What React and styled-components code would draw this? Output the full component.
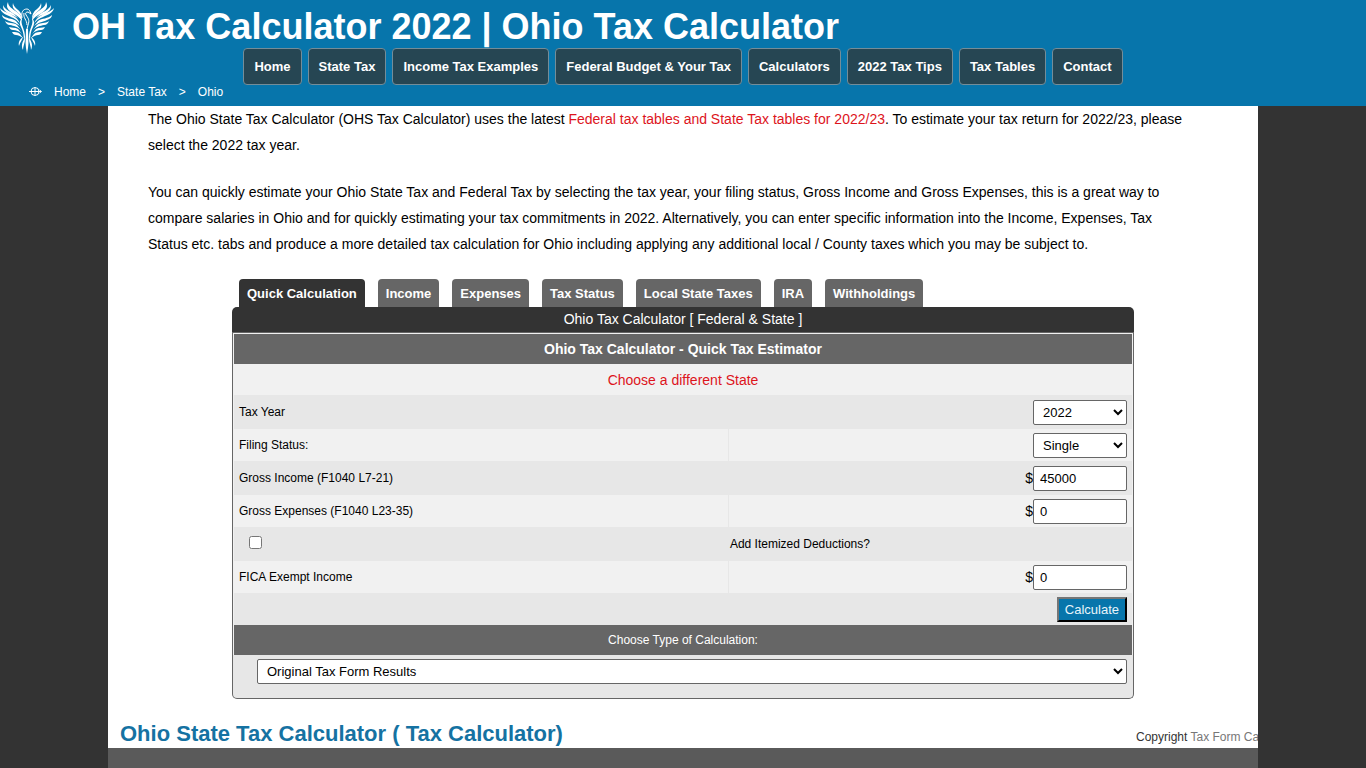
import styled, { createGlobalStyle } from "styled-components";
import { useState } from "react";

const GlobalStyle = createGlobalStyle`
  * {
    box-sizing: border-box;
  }

  body {
    margin: 0;
    background-color: #333;
    font-family: "Liberation Sans", Arial, sans-serif;
    font-size: 14px;
    color: #000;
  }
`;

const Header = styled.header`
  display: grid;
  grid-template-columns: 72px 1fr;
  background-color: #0775ab;
  color: #fff;
`;

const LogoLink = styled.a`
  height: 48px;
  color: #fff;

  svg {
    display: block;
    overflow: visible;
  }
`;

const Title = styled.h1`
  margin: 0;
  padding-top: 6px;
  font-size: 36px;
  line-height: 42px;
  white-space: nowrap;
`;

const Nav = styled.nav`
  grid-column: 1 / -1;
  display: flex;
  justify-content: center;
  gap: 6px;
`;

const NavLink = styled.a`
  padding: 0 10px;
  border: 1px solid #738d99;
  border-radius: 4px;
  background-color: #264653;
  color: #fff;
  font-size: 13px;
  font-weight: bold;
  line-height: 35px;
  text-decoration: none;
  white-space: nowrap;
`;

const Breadcrumb = styled.nav`
  grid-column: 1 / -1;
  display: flex;
  align-items: center;
  gap: 12px;
  height: 21px;
  padding: 0 0 8px 29px;
  font-size: 12px;

  a {
    color: #fff;
    text-decoration: none;
  }
`;

const Page = styled.main`
  max-width: 1150px;
  margin: 0 auto;
  background-color: #fff;
`;

const Intro = styled.div`
  padding: 0 70px 1px 40px;

  p {
    margin: 0 0 21px;
    line-height: 26px;
  }
`;

const RedLink = styled.a`
  color: #dd141c;
  text-decoration: none;
`;

const Calculator = styled.form`
  max-width: 902px;
  margin: 0 auto;
`;

const Tabs = styled.div`
  display: flex;
  gap: 13px;
  padding-left: 7px;
`;

const Tab = styled.button`
  height: 28px;
  padding: 0 8px;
  border: 0;
  border-radius: 4px 4px 0 0;
  background-color: ${(props) => (props.$active ? "#333" : "#666")};
  color: #fff;
  font: bold 13px "Liberation Sans", Arial, sans-serif;
  white-space: nowrap;
  cursor: pointer;
`;

const PanelTitle = styled.div`
  border-bottom: 1px solid #666;
  border-radius: 5px 5px 0 0;
  background-color: #333;
  color: #fff;
  line-height: 25px;
  text-align: center;
`;

const Panel = styled.div`
  border: 1px solid #666;
  border-top: 0;
  border-radius: 0 0 5px 5px;
  background-color: #e7e7e7;
`;

const Table = styled.table`
  width: 100%;
  padding: 1px 1px 0;
  border-spacing: 0;
  table-layout: fixed;
  background-color: #f1f1f1;
  font-size: 12px;

  td,
  th {
    padding: 0 5px;
  }

  td + td {
    padding-left: 1px;
  }
`;

const LabelCol = styled.col`
  width: 55%;
`;

const BarRow = styled.tr`
  height: 30px;
  background-color: #666;
  color: #fff;
`;

const BarTitle = styled.th`
  font-size: ${(props) => (props.$small ? "12px" : "14px")};
  font-weight: ${(props) => (props.$small ? "normal" : "bold")};
`;

const Row = styled.tr`
  height: ${(props) => (props.$dark ? "34px" : "32px")};
  background-color: ${(props) => (props.$dark ? "#e7e7e7" : "#f1f1f1")};

  td + td {
    border-left: 1px solid #e7e7e7;
  }
`;

const CenterCell = styled.td`
  height: 31px;
  font-size: 14px;
  text-align: center;
`;

const Field = styled.div`
  display: flex;
  justify-content: flex-end;
  align-items: center;
  font-size: 14px;
`;

const Input = styled.input`
  width: 94px;
  height: 25px;
  padding: 0 6px;
  border: 1px solid #666;
  border-radius: 2px;
  font: 13px "Liberation Sans", Arial, sans-serif;
`;

const Select = styled.select`
  width: ${(props) => (props.$wide ? "100%" : "94px")};
  height: 25px;
  padding: 0 5px;
  border: 1px solid #666;
  border-radius: 2px;
  background-color: #fff;
  color: #000;
  font: 13px "Liberation Sans", Arial, sans-serif;
`;

const Checkbox = styled.input`
  display: block;
  margin: 0 0 3px 10px;
`;

const CalcRow = styled.tr`
  height: 32px;
  background-color: #e7e7e7;
`;

const CalcButton = styled.button`
  height: 25px;
  padding: 0 6px;
  border: 2px outset #222;
  background-color: #0775ab;
  color: #e8f4fa;
  font: 13px "Liberation Sans", Arial, sans-serif;
`;

const ResultType = styled.div`
  padding: 4px 6px 14px 24px;
`;

const Bottom = styled.div`
  display: flex;
  justify-content: space-between;
  padding: 20px 0 0 12px;
  height: 49px;
`;

const SectionTitle = styled.h2`
  margin: 0;
  color: #1572a2;
  font-size: 22px;
  line-height: 29px;
  white-space: nowrap;
`;

const Copyright = styled.div`
  width: 122px;
  overflow: hidden;
  color: #333;
  font-size: 12px;
  line-height: 36px;
  white-space: nowrap;

  a {
    color: #777;
    text-decoration: none;
  }
`;

const FooterBar = styled.footer`
  max-width: 1150px;
  height: 20px;
  margin: 0 auto;
  background-color: #5a5a5a;
`;

const navItems = [
  "Home",
  "State Tax",
  "Income Tax Examples",
  "Federal Budget & Your Tax",
  "Calculators",
  "2022 Tax Tips",
  "Tax Tables",
  "Contact",
];

const tabs = [
  "Quick Calculation",
  "Income",
  "Expenses",
  "Tax Status",
  "Local State Taxes",
  "IRA",
  "Withholdings",
];

const Wing = () => (
  <g>
    <path d="M8 2 C8 7 13 9 17 12 C21 15 22 18 22 21 C19 16 15 15 11 12 C7 9 6 6 8 2Z" />
    <path d="M13 3 C14 8 18 9 20 12 C22 15 22 17 22 19 C21 15 18 13 16 11 C13 9 12 6 13 3Z" />
    <path d="M0 8 C3 12 8 12 12 15 C16 17 19 20 20 24 C17 19 13 18 9 16 C4 14 1 12 0 8Z" />
    <path d="M3 5 C5 10 10 11 14 14 L18 18 C13 15 8 14 5 11 C3 9 3 7 3 5Z" />
    <path d="M2 15 C6 19 12 18 16 21 L20 26 C15 22 11 22 7 20 C4 19 2 17 2 15Z" />
    <path d="M5 21 C9 24 13 22 17 25 L21 30 C17 26 14 26 10 25 C7 25 6 23 5 21Z" />
    <path d="M9 27 C12 28 15 27 18 29 L22 34 C19 31 16 30 13 30 C11 30 10 29 9 27Z" />
    <path d="M12 32 C15 32 18 32 20 34 L23 38 C20 36 18 35 16 35 C14 35 13 34 12 32Z" />
    <path d="M22 18 C20 25 25 28 25 37 L24 43 C24 35 23 31 21 27 C19 23 20 20 22 18Z" />
    <path d="M23 37 C20 39 18 42 19 46 C20 42 22 41 23 37Z" />
    <path d="M25 38 C22 42 21 46 23 50 C23 46 25 43 25 38Z" />
  </g>
);

const PhoenixLogo = () => (
  <svg width="54" height="54" viewBox="0 0 54 54" fill="currentColor" aria-hidden="true">
    <Wing />
    <g transform="translate(54 0) scale(-1 1)">
      <Wing />
    </g>
    <path
      d="M22 18 C21 12 23 9 27 9 C29 9 30 11 31 14 L28 12 C26 12 25 13 26 15 C28 18 30 20 28 25 L27 29 M24 13 C23 18 27 20 27 25"
      fill="none"
      stroke="currentColor"
      strokeWidth="1"
    />
    <path d="M26 29 L28 29 C28 36 29 43 28 48 L27 54 L26 48 C25 42 26 36 26 29Z" />
  </svg>
);

const CrumbIcon = () => (
  <svg width="13" height="11" viewBox="0 0 13 11" fill="none" stroke="#fff" aria-hidden="true">
    <circle cx="6" cy="5.5" r="4" />
    <path d="M6 1.5v8M0 5.5h12M10.500 4l2 1.500-2 1.500" />
  </svg>
);

const MoneyField = ({ id, value, onChange }) => (
  <Field>
    $
    <Input id={id} type="text" name={id} value={value} onChange={onChange} />
  </Field>
);

const App = () => {
  const [activeTab, setActiveTab] = useState("Quick Calculation");
  const [values, setValues] = useState({ income: "45000", expenses: "0", fica: "0" });

  function handleChange(e) {
    const { name, value } = e.target;
    setValues((prev) => ({ ...prev, [name]: value }));
  }

  return (
    <>
      <GlobalStyle />
      <Header>
        <LogoLink href="#" aria-label="Home">
          <PhoenixLogo />
        </LogoLink>
        <Title>OH Tax Calculator 2022 | Ohio Tax Calculator</Title>
        <Nav>
          {navItems.map((item) => (
            <NavLink key={item} href="#">{item}</NavLink>
          ))}
        </Nav>
        <Breadcrumb>
          <CrumbIcon />
          <a href="#">Home</a>
          <span>&gt;</span>
          <a href="#">State Tax</a>
          <span>&gt;</span>
          <a href="#">Ohio</a>
        </Breadcrumb>
      </Header>

      <Page>
        <Intro>
          <p>
            The Ohio State Tax Calculator (OHS Tax Calculator) uses the latest{" "}
            <RedLink href="#">Federal tax tables and State Tax tables for 2022/23</RedLink>. To
            estimate your tax return for 2022/23, please select the 2022 tax year.
          </p>
          <p>
            You can quickly estimate your Ohio State Tax and Federal Tax by selecting the tax year,
            your filing status, Gross Income and Gross Expenses, this is a great way to compare
            salaries in Ohio and for quickly estimating your tax commitments in 2022.
            Alternatively, you can enter specific information into the Income, Expenses, Tax Status
            etc. tabs and produce a more detailed tax calculation for Ohio including applying any
            additional local / County taxes which you may be subject to.
          </p>
        </Intro>

        <Calculator onSubmit={(e) => e.preventDefault()}>
          <Tabs>
            {tabs.map((tab) => (
              <Tab
                key={tab}
                type="button"
                $active={tab === activeTab}
                onClick={() => setActiveTab(tab)}
              >
                {tab}
              </Tab>
            ))}
          </Tabs>
          <PanelTitle>Ohio Tax Calculator [ Federal &amp; State ]</PanelTitle>
          <Panel>
            <Table>
              <colgroup>
                <LabelCol />
                <col />
              </colgroup>
              <tbody>
                <BarRow>
                  <BarTitle colSpan={2}>Ohio Tax Calculator - Quick Tax Estimator</BarTitle>
                </BarRow>
                <tr>
                  <CenterCell colSpan={2}>
                    <RedLink href="#">Choose a different State</RedLink>
                  </CenterCell>
                </tr>
                <Row $dark>
                  <td><label htmlFor="year">Tax Year</label></td>
                  <td>
                    <Field>
                      <Select id="year" defaultValue="2022">
                        <option>2022</option>
                        <option>2021</option>
                      </Select>
                    </Field>
                  </td>
                </Row>
                <Row>
                  <td><label htmlFor="status">Filing Status:</label></td>
                  <td>
                    <Field>
                      <Select id="status">
                        <option>Single</option>
                        <option>Married</option>
                      </Select>
                    </Field>
                  </td>
                </Row>
                <Row $dark>
                  <td><label htmlFor="income">Gross Income (F1040 L7-21)</label></td>
                  <td><MoneyField id="income" value={values.income} onChange={handleChange} /></td>
                </Row>
                <Row>
                  <td><label htmlFor="expenses">Gross Expenses (F1040 L23-35)</label></td>
                  <td><MoneyField id="expenses" value={values.expenses} onChange={handleChange} /></td>
                </Row>
                <Row $dark>
                  <td><Checkbox id="itemized" type="checkbox" /></td>
                  <td><label htmlFor="itemized">Add Itemized Deductions?</label></td>
                </Row>
                <Row>
                  <td><label htmlFor="fica">FICA Exempt Income</label></td>
                  <td><MoneyField id="fica" value={values.fica} onChange={handleChange} /></td>
                </Row>
                <CalcRow>
                  <td colSpan={2}>
                    <Field>
                      <CalcButton type="submit">Calculate</CalcButton>
                    </Field>
                  </td>
                </CalcRow>
                <BarRow>
                  <BarTitle colSpan={2} $small>
                    <label htmlFor="result">Choose Type of Calculation:</label>
                  </BarTitle>
                </BarRow>
              </tbody>
            </Table>
            <ResultType>
              <Select id="result" $wide>
                <option>Original Tax Form Results</option>
              </Select>
            </ResultType>
          </Panel>
        </Calculator>

        <Bottom>
          <SectionTitle>Ohio State Tax Calculator ( Tax Calculator)</SectionTitle>
          <Copyright>
            Copyright <a href="#">Tax Form Calculator</a>
          </Copyright>
        </Bottom>
      </Page>
      <FooterBar />
    </>
  );
};

export default App;
